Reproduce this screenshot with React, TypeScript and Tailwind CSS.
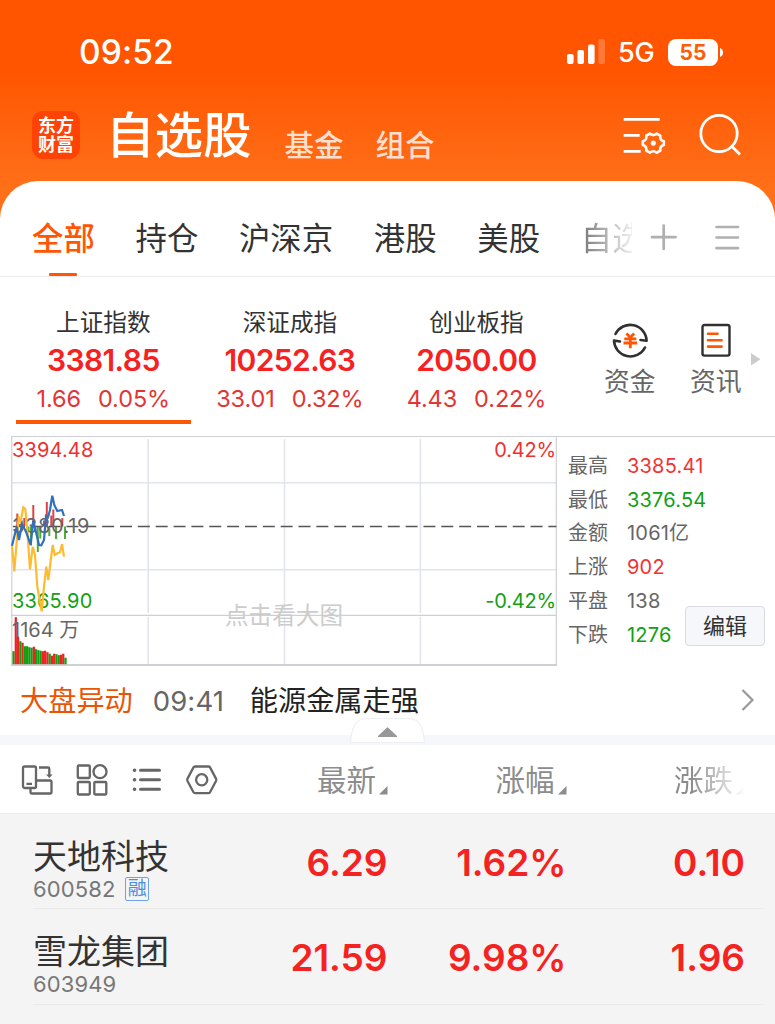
import { useState } from 'react';

interface IndexQuote {
  name: string;
  value: string;
  change: string;
  percent: string;
}

interface Stock {
  name: string;
  code: string;
  margin: boolean;
  price: string;
  percent: string;
  change: string;
}

const tabs = ['全部', '持仓', '沪深京', '港股', '美股', '自选'];

const indexes: IndexQuote[] = [
  { name: '上证指数', value: '3381.85', change: '1.66', percent: '0.05%' },
  { name: '深证成指', value: '10252.63', change: '33.01', percent: '0.32%' },
  { name: '创业板指', value: '2050.00', change: '4.43', percent: '0.22%' },
];

const stats = [
  { label: '最高', value: '3385.41', color: 'text-[#f03434]' },
  { label: '最低', value: '3376.54', color: 'text-[#12a012]' },
  { label: '金额', value: '1061亿', color: 'text-[#666]' },
  { label: '上涨', value: '902', color: 'text-[#f03434]' },
  { label: '平盘', value: '138', color: 'text-[#666]' },
  { label: '下跌', value: '1276', color: 'text-[#12a012]' },
];

const stocks: Stock[] = [
  { name: '天地科技', code: '600582', margin: true, price: '6.29', percent: '1.62%', change: '0.10' },
  { name: '雪龙集团', code: '603949', margin: false, price: '21.59', percent: '9.98%', change: '1.96' },
];

// [height, is up]
const volumes: [number, boolean][] = [
  [13, false], [47, true], [27.5, true], [23, false], [21.5, true], [18, false], [18, false], [17, false],
  [16.5, false], [17.5, true], [15, false], [14, false], [13.5, false], [13, true], [13.5, true], [12, true],
  [10.5, false], [8.5, true], [10.5, true], [10, false], [9, false], [9.5, true], [10.5, true], [6.5, false],
];

// [x, height], negative goes below the previous close
const strength: [number, number][] = [
  [6.3, 13], [13.3, 8.5], [22.3, 21.5], [33, 6], [35.8, 24.5], [40.3, 11], [42.3, 17], [51.3, 8.5],
  [17.5, -5], [20, -19], [26.8, -25.5], [29.3, -12], [38.3, -9.5], [45, -12.5], [54, -12.5],
];

function StatusBar() {
  return (
    <div className="flex h-[104px] items-center pl-[79px] pr-[52px]">
      <span className="text-[33.5px] font-medium leading-[40px] tracking-[0.1px]">09:52</span>
      <svg className="ml-auto" width="38" height="26" viewBox="0 0 38 26" fill="#fff">
        <rect x="0" y="15" width="6.6" height="10" rx="2" />
        <rect x="10.4" y="11" width="6.6" height="14" rx="2" />
        <rect x="21" y="5.5" width="6.6" height="19.5" rx="2" />
        <rect x="31.4" y="0" width="6.6" height="25" rx="2" opacity="0.22" />
      </svg>
      <span className="ml-[13px] mt-[2px] w-[36px] text-[27px] font-medium leading-[30px] tracking-[-0.3px]">5G</span>
      <div className="ml-[14px] flex h-[27px] w-[50px] items-center justify-center rounded-[8px] bg-white text-[21px] font-bold leading-[27px] text-[#ff5c08]">
        55
      </div>
      <svg className="ml-[2px]" width="3" height="9" viewBox="0 0 3 9">
        <path d="M0 0C4 1.5 4 7.5 0 9z" fill="#fff" />
      </svg>
    </div>
  );
}

function TitleBar() {
  return (
    <div className="flex h-[77px] pl-8 pr-[33px]">
      <div className="mt-[7px] flex h-12 w-12 items-center justify-center rounded-[11px] bg-[#ff4304] text-center text-[18px] font-bold leading-[19.5px]">
        东方
        <br />
        财富
      </div>
      <h1 className="ml-[26px] mt-[2px] text-[48.5px] font-medium leading-[60px]">自选股</h1>
      <span className="ml-[33px] mt-[21px] text-[29.5px] font-medium leading-[40px] text-[#ffdfcd]">基金</span>
      <span className="ml-[32px] mt-[21px] text-[29.5px] font-medium leading-[40px] text-[#ffdfcd]">组合</span>
      <svg className="ml-auto mt-[12px]" width="44" height="40" viewBox="0 0 44 40" fill="none" stroke="#fff" strokeWidth="2.8">
        <path d="M.7 3.3h36M.7 19.3h16M.7 35.3h17" />
        <path
          d="M26.8 17.600Q30.300 20.500 33.800 17.600L37.300 19.700Q36.600 24 40.800 25.300V29Q36.600 30.300 37.300 34.600L33.800 36.700Q30.300 33.800 26.800 36.700L23.300 34.600Q24 30.300 19.800 29V25.300Q24 24 23.300 19.700Z"
          strokeWidth="2.6"
          strokeLinejoin="round"
        />
        <circle cx="30.3" cy="27.1" r="2.6" fill="#fff" stroke="none" />
      </svg>
      <svg className="ml-[32px] mt-[9px]" width="43" height="44" viewBox="0 0 43 44" fill="none" stroke="#fff" strokeWidth="2.8">
        <circle cx="20" cy="20.5" r="18.2" />
        <path d="M32 32.500l9 9" />
      </svg>
    </div>
  );
}

function Tabs() {
  const [active, setActive] = useState(0);

  return (
    <div className="flex h-[96px] border-b border-[#ececec] pl-8">
      <div className="flex w-[600px] gap-[40.7px] overflow-hidden whitespace-nowrap">
        {tabs.map((tab, index) => (
          <button
            key={tab}
            onClick={() => setActive(index)}
            className={`flex shrink-0 flex-col items-center text-[31.4px] leading-[40px] ${
              index === active ? 'font-medium text-[#ff5604]' : 'text-[#333]'
            } ${index === tabs.length - 1 ? 'bg-linear-to-r from-[#777] to-[#fff] to-90% bg-clip-text text-transparent' : ''}`}
          >
            <span className="mt-[38px]">{tab}</span>
            {index === active && <span className="mt-[14px] h-1 w-7 rounded-[1px] bg-[#ff5604]" />}
          </button>
        ))}
      </div>
      <svg className="ml-[18px] mt-[42px]" width="28" height="28" viewBox="0 0 28 28" stroke="#b0b0b0" strokeWidth="2.7" strokeLinecap="round">
        <path d="M2 14.2h23.500M13.700 2.500v23.500" />
      </svg>
      <svg className="ml-[36px] mt-[42px]" width="28" height="28" viewBox="0 0 28 28" stroke="#b0b0b0" strokeWidth="2.7" strokeLinecap="round">
        <path d="M2.500 4h21.500M2.500 14.500h21.500M2.500 25.200h21.500" />
      </svg>
    </div>
  );
}

function IndexPanel() {
  return (
    <div className="flex h-[159px] pl-[10px]">
      {indexes.map((item, index) => (
        <div key={item.name} className="flex w-[186.6px] flex-col items-center pt-[30px]">
          <div className="text-[23.6px] leading-[32px] text-[#333]">{item.name}</div>
          <div className="mt-[2px] text-[30px] font-semibold leading-[38px] tracking-[-0.6px] text-[#f52222]">{item.value}</div>
          <div className="mt-[4px] flex gap-[17px] text-[23.5px] leading-[32px] tracking-[-0.1px] text-[#e23636]">
            <span>{item.change}</span>
            <span>{item.percent}</span>
          </div>
          {index === 0 && <div className="mt-[5px] h-1 w-[175px] bg-[#ff5604]" />}
        </div>
      ))}
      <div className="ml-[17px] flex w-[86px] flex-col items-center pt-[44px] text-[25.8px] leading-[34px] text-[#666]">
        <svg width="38" height="38" viewBox="0 0 38 38" fill="none" stroke="#303030" strokeWidth="2.6">
          <path d="M4.500 13A16.400 16.400 0 0 1 35.600 19.800L29.500 19" strokeLinejoin="round" strokeLinecap="round" />
          <path d="M34 26.500A16.400 16.400 0 0 1 3 19.500L9 20.500" strokeLinejoin="round" strokeLinecap="round" />
          <path d="M15.500 12.500l3.800 4 3.800-4M13.300 17.800h12M12.500 22h13.600M19.300 16.500v10.700" stroke="#ff5604" strokeWidth="2.8" />
        </svg>
        <span className="mt-[6px]">资金</span>
      </div>
      <div className="flex w-[86px] flex-col items-center pt-[44px] text-[25.8px] leading-[34px] text-[#666]">
        <svg width="38" height="38" viewBox="0 0 38 38" fill="none" stroke="#303030" strokeWidth="2.4">
          <rect x="5.5" y="4" width="27" height="30.6" rx="2" />
          <path d="M11 12.800h9.600M11 19.200h13.600M11 25.600h13.600" stroke="#ff5604" strokeWidth="2.6" strokeLinecap="round" />
        </svg>
        <span className="mt-[6px]">资讯</span>
      </div>
      <svg className="-ml-[8px] mt-[76px]" width="10" height="13" viewBox="0 0 10 13">
        <path d="M0 0l9.5 6.2L0 12.5z" fill="#ccc" />
      </svg>
    </div>
  );
}

function MinuteChart() {
  return (
    <svg className="shrink-0" width="546" height="230" viewBox="0 0 546 230" fill="none" fontSize="20">
      <g stroke="#e2e4ee" strokeWidth="1.6">
        <path d="M1 45.700h544M1 132.800h544" />
        <path d="M137.2 2v174M273.5 2v174M409.4 2v174M137.2 180v48M273.5 180v48M409.4 180v48" />
      </g>
      <g stroke="#cfd0d6" strokeWidth="1.2">
        <path d="M.8 0v228M545.3 0v228M0 178.300h546" />
        <path d="M0 228h546" strokeWidth="1.8" />
      </g>
      <text x="273" y="187" textAnchor="middle" fontSize="23.6" fill="#ccc">点击看大图</text>
      {strength.map(([x, height]) => (
        <path key={x} d={`M${x} 89.500v${-height}`} stroke={height > 0 ? '#d94444' : '#4fae3a'} strokeWidth="2" />
      ))}
      {volumes.map(([height, up], index) => (
        <rect
          key={index}
          x={1.4 + index * 2.26}
          y={227.2 - height}
          width="2.26"
          height={height}
          fill={up ? '#ee2222' : '#12a012'}
        />
      ))}
      <path d="M1.900 89.500h543.500" stroke="#555" strokeWidth="1.3" strokeDasharray="12 5.85" />
      <g fontSize="20">
        <text x="1" y="20.3" fill="#ee3030" letterSpacing="0.15">3394.48</text>
        <text x="1" y="96" fill="#666" letterSpacing="0.6">3380.19</text>
        <text x="1" y="171" fill="#12a012" letterSpacing="0.15">3365.90</text>
        <text x="545" y="20.3" textAnchor="end" fill="#ee3030" letterSpacing="-0.2">0.42%</text>
        <text x="545" y="171" textAnchor="end" fill="#12a012" letterSpacing="-0.2">-0.42%</text>
        <text x="1" y="199.5" fill="#666">1164 万</text>
      </g>
      <path
        d="M1 108l2.300 26.500 4.400-54 2 4L12.300 70.300l2 1.700 2 21L19 132.300l2.700-22.600 2.300 8.300 2.300 31.700 4.400 24.600 2.300-24.600 2.300-20 2 13.300 4.400-35 2 10 2.700-1.700 2.600-1 2-8 2 12.300"
        stroke="#fdbb30"
        strokeWidth="2.2"
      />
      <path
        d="M1 108.700l4.700-19 2.300 13.300 3-16 4 7.700 4.700 13.300 2.600-24.300 3.400 14.300 2.300 10 2.300.3 2.700-5.300 2-24 2 1.300 2-7.300 2.300-14.300 2 9.300 3 6 4.700-1 2 6"
        stroke="#3070bc"
        strokeWidth="2.2"
      />
    </svg>
  );
}

function ChartPanel() {
  return (
    <div className="ml-[11px] flex h-[230px] border-t border-[#cfd0d6]">
      <MinuteChart />
      <div className="ml-[11px] w-[117px] shrink-0 pt-[12px]">
        {stats.map((item) => (
          <div key={item.label} className="flex h-[33.8px] items-center text-[20px]">
            <span className="w-[59px] shrink-0 text-[#666]">{item.label}</span>
            <span className={`whitespace-nowrap tracking-[0.2px] ${item.color}`}>{item.value}</span>
          </div>
        ))}
      </div>
      <button className="mt-[169px] h-[40px] w-[80px] shrink-0 rounded-[4px] border border-[#d9dae2] bg-[#f6f7fa] text-[22px] leading-[36px] text-[#333]">
        编辑
      </button>
    </div>
  );
}

function MarketAlert() {
  return (
    <div className="relative flex h-[79px] items-start border-b-[10px] border-[#f5f7fa] pl-5 pr-[20px] pt-[15px] text-[28.2px] leading-[40px]">
      <span className="text-[#ea5504]">大盘异动</span>
      <span className="ml-[20px] w-[97px] text-[27.500px] text-[#666] tracking-[0.1px]">09:41</span>
      <span className="text-[#222]">能源金属走强</span>
      <svg className="ml-auto mt-[7px]" width="14" height="24" viewBox="0 0 14 24" fill="none" stroke="#999" strokeWidth="2.2">
        <path d="M1.500 2l10 10L1.500 22" />
      </svg>
      {/* Collapse handle */}
      <svg className="absolute -bottom-[9px] left-[349px]" width="78" height="28" viewBox="0 0 78 28">
        <path d="M1.500 26.500C2.500 14.500 5 2.500 17 2.500h43C72 2.500 74.500 14.500 75.500 26.500z" fill="#fff" stroke="#eeeff2" strokeWidth="1.200" />
        <path d="M29 20l9-8.500q.500-.500 1 0l9 8.500v1H29z" fill="#999" />
      </svg>
    </div>
  );
}

function SortLabel({ children }: { children: string }) {
  return (
    <span className="flex items-center justify-end text-[29.5px] leading-[40px] text-[#8c8c8c]">
      {children}
      <svg className="ml-[3px] mt-[21px]" width="9" height="9" viewBox="0 0 9 9">
        <path d="M8.500 0v8.500H0z" fill="#8c8c8c" />
      </svg>
    </span>
  );
}

function ListHeader() {
  return (
    <div className="flex h-[69px] items-center border-b border-[#ebebeb] pl-[20px] pt-[2px]">
      <svg width="200" height="34" viewBox="0 0 200 34" fill="none" stroke="#666" strokeWidth="2.300" strokeLinejoin="round">
        <rect x="3" y="3.500" width="13" height="21.500" rx="1.500" />
        <path d="M6.500 20.800h5.500M16 17.500h14q1.500 0 1.500 1.500v10q0 1.500-1.500 1.500H12q-1.500 0-1.500-1.500v-4M19 4.500h9q1.300 0 1.300 1.300v7" />
        <path d="M26 11.500h6.600l-3.300 3.500z" fill="#666" stroke="none" />
        <rect x="57.800" y="2.500" width="12" height="12.500" rx="1" />
        <circle cx="80" cy="8.700" r="6.500" />
        <rect x="57.800" y="19" width="12" height="12.500" rx="1" />
        <rect x="74.300" y="19" width="12" height="12.500" rx="1" />
        <path d="M120.500 7.300h19M120.500 16.800h19M120.500 26.300h19" strokeWidth="3" strokeLinecap="round" />
        <path d="M114.500 7.300h.1M114.500 16.800h.1M114.500 26.300h.1" strokeWidth="3.600" strokeLinecap="round" />
        <path d="M175 3.500h13.500q1 0 1.500.9l6 11.200q.600 1.200 0 2.400l-6 11.200q-.500.900-1.500.9H175q-1 0-1.500-.9l-6-11.200q-.600-1.200 0-2.400l6-11.200q.500-.9 1.500-.9z" />
        <circle cx="181.700" cy="16.800" r="5.600" />
      </svg>
      <div className="w-[168px]">
        <SortLabel>最新</SortLabel>
      </div>
      <div className="w-[178.500px]">
        <SortLabel>涨幅</SortLabel>
      </div>
      <div className="w-[178.500px] mask-r-from-70% mask-r-to-100%">
        <SortLabel>涨跌</SortLabel>
      </div>
    </div>
  );
}

function StockRow({ stock }: { stock: Stock }) {
  return (
    <div className="ml-[33px] mr-[11px] flex h-[95.4px] border-b border-[#ebebeb] text-[37px] font-semibold leading-[44px] text-[#f52222]">
      <div className="w-[180px] pt-[22px] font-normal">
        <div className="text-[34px] leading-[42px] text-[#333]">{stock.name}</div>
        <div className="flex h-[22px] items-center text-[22px] leading-[22px] tracking-[0.1px] text-[#777]">
          {stock.code}
          {stock.margin && (
            <span className="ml-[10px] flex h-6 w-6 items-center justify-center rounded-[2px] border border-[#6fa3e3] text-[19px] leading-[22px] text-[#4a8ee0]">
              融
            </span>
          )}
        </div>
      </div>
      <div className="w-[174.500px] pt-[27px] text-right">{stock.price}</div>
      <div className="w-[179px] pt-[27px] text-right">{stock.percent}</div>
      <div className="w-[178.500px] pt-[27px] text-right">{stock.change}</div>
    </div>
  );
}

export default function App() {
  return (
    <div className="h-[1024px] w-[775px] overflow-hidden bg-white font-['Inter','Noto_Sans_CJK_SC',sans-serif]">
      <div className="bg-linear-to-b from-[#ff5500] from-[70px] to-[#ff7018] to-[190px]">
        <header className="text-white">
          <StatusBar />
          <TitleBar />
        </header>
        <div className="rounded-t-[38px] bg-white">
          <Tabs />
        </div>
      </div>
      <IndexPanel />
      <ChartPanel />
      <MarketAlert />
      <ListHeader />
      <div className="h-[220px] bg-[#f4f4f4]">
        {stocks.map((stock) => (
          <StockRow key={stock.code} stock={stock} />
        ))}
      </div>
    </div>
  );
}
